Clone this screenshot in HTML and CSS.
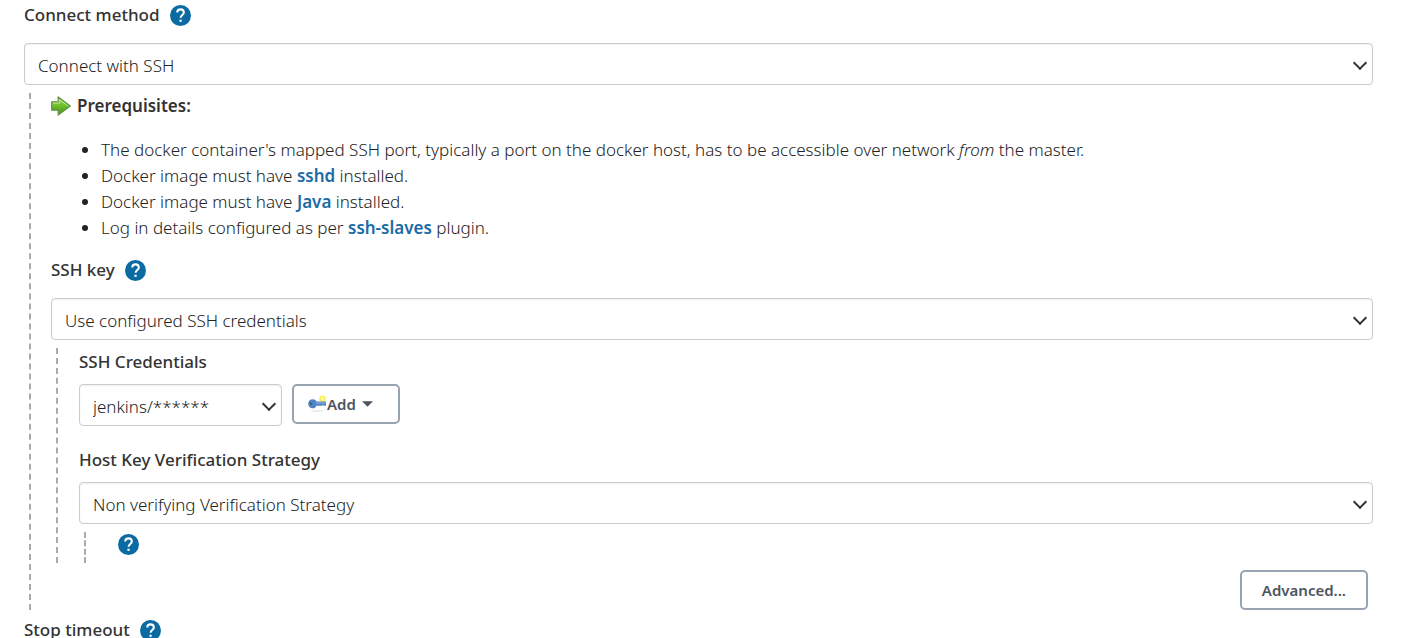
FILE: index.html
```html
<!DOCTYPE html>
<html lang="en">
<head>
<meta charset="utf-8">
<meta name="viewport" content="width=device-width, initial-scale=1">
<title>Docker agent template</title>
<link rel="stylesheet" href="styles.css">
</head>
<body>
<svg class="defs" aria-hidden="true">
  <symbol id="help" viewBox="0 0 24 24"><path d="M12 0a12 12 0 1 0 0 24 12 12 0 0 0 0-24z" fill="#0b6aa2"/><path d="M8.300 8.600C8.300 6.300 9.900 5 12 5s3.800 1.300 3.800 3.500c0 2.900-3.700 3-3.700 6.200" fill="none" stroke="#fff" stroke-width="2.300"/><path d="M10.800 16.800h2.500v2.500h-2.500z" fill="#fff"/></symbol>
</svg>
<form class="config">
  <div class="label-row">
    <label for="method">Connect method</label>
    <button type="button" class="help" aria-label="Help for Connect method"><svg><use href="#help"/></svg></button>
  </div>
  <div class="select"><select id="method"><option>Connect with SSH</option></select></div>

  <div class="nested">
    <div class="prereq">
      <svg class="arrow" viewBox="0 0 20 20" aria-hidden="true">
        <defs><linearGradient id="green" x1="0" y1="0" x2="0" y2="1"><stop offset="0" stop-color="#b3da72"/><stop offset=".5" stop-color="#6cbd28"/><stop offset="1" stop-color="#47941f"/></linearGradient></defs>
        <path d="M.7 5.800h6.500V.9L19.300 10 7.200 19.100v-4.900H.7z" fill="url(#green)" stroke="#5c9440" stroke-width="1.200" stroke-linejoin="round"/>
        <path d="M2 7.100h6.400V3.500L17.200 10" fill="none" stroke="#c9e7a4" stroke-width=".9"/>
      </svg>
      <b>Prerequisites:</b>
    </div>
    <ul class="list">
      <li>The docker container's mapped SSH port, typically a port on the docker host, has to be accessible over network <i>from</i> the master.</li>
      <li>Docker image must have <a href="#sshd">sshd</a> installed.</li>
      <li>Docker image must have <a href="#java">Java</a> installed.</li>
      <li>Log in details configured as per <a href="#ssh-slaves">ssh-slaves</a> plugin.</li>
    </ul>

    <div class="label-row">
      <label for="key">SSH key</label>
      <button type="button" class="help" aria-label="Help for SSH key"><svg><use href="#help"/></svg></button>
    </div>
    <div class="select"><select id="key"><option>Use configured SSH credentials</option></select></div>

    <div class="nested inner">
      <div class="field">
        <label for="cred">SSH Credentials</label>
        <div class="controls">
          <div class="select small"><select id="cred"><option>jenkins/******</option></select></div>
          <button type="button" class="button add">
            <svg class="key" viewBox="0 0 20 18" aria-hidden="true">
              <ellipse cx="10" cy="16" rx="7" ry="1.200" fill="#eee"/>
              <circle cx="15.500" cy="3.700" r="2.500" fill="#fff9a0" stroke="#f9ee5c" stroke-width="1.600"/>
              <path d="M6 4.200c1.500 0 2.700.9 3.400 2.300H19v4.200h-2l-1-.7-1 .7H9.400C8.700 12.300 7.500 13.300 5.800 13.300 3 13.300 1.200 11.300 1.200 8.800S3 4.200 6 4.200z" fill="#4f83c1"/>
              <path d="M8.500 8h10" stroke="#94b5dd" stroke-width="1"/><circle cx="3.800" cy="8.700" r="1.100" fill="#315d96"/>
            </svg>
            <span>Add</span>
            <svg class="caret" viewBox="0 0 12 6" aria-hidden="true"><path d="M0 0h12L6 6z" fill="#4d545d"/></svg>
          </button>
        </div>
      </div>
      <div class="field">
        <label for="strategy">Host Key Verification Strategy</label>
        <div class="select"><select id="strategy"><option>Non verifying Verification Strategy</option></select></div>
      </div>
      <div class="nested strategy">
        <button type="button" class="help" aria-label="Help for Host Key Verification Strategy"><svg><use href="#help"/></svg></button>
      </div>
    </div>
    <div class="actions"><button type="button" class="button">Advanced...</button></div>
  </div>

  <div class="label-row last">
    <span>Stop timeout</span>
    <button type="button" class="help" aria-label="Help for Stop timeout"><svg><use href="#help"/></svg></button>
  </div>
</form>
</body>
</html>
```
FILE: styles.css
```css
* { box-sizing: border-box; }
html { overflow-x: hidden; }
body {
  margin: 0;
  background: #fff;
  color: #333;
  font: 300 17px/26px "Noto Sans", "Open Sans", sans-serif;
}
.defs { position: absolute; width: 0; height: 0; }
.config { padding: 1px 32px 0 24px; }

.label-row {
  display: flex;
  align-items: center;
  gap: 10px;
  height: 28px;
  margin-bottom: 14px;
  font-weight: 500;
}
.help { width: 21px; height: 21px; padding: 0; border: 0; background: none; }
.help svg { display: block; width: 21px; height: 21px; }

.select { position: relative; }
.select::after {
  content: "";
  position: absolute;
  right: 8px;
  top: 15px;
  width: 8px;
  height: 8px;
  border: solid #333;
  border-width: 0 2px 2px 0;
  transform: rotate(45deg);
}
select {
  appearance: none;
  display: block;
  width: 100%;
  height: 42px;
  padding: 3px 13px 0;
  border: 1px solid #ccc;
  border-radius: 4px;
  background: #fff;
  box-shadow: inset 0 1px 2px #0001;
  color: #222;
  font: inherit;
}
.nested {
  margin: 8px 0 0 5px;
  padding-left: 20px;
  border-left: 2px dashed #aaa;
}
.inner { padding-left: 21px; }
.prereq { display: flex; align-items: center; gap: 6px; }
.prereq b { font-weight: 600; }
.arrow { width: 20px; height: 20px; }
.list { margin: 18px 0 15px; padding-left: 50px; color: #222; }
.list a { color: #1b6ba6; font-weight: 600; text-decoration: none; }

.field { margin-bottom: 20px; }
.field > label { display: block; margin-bottom: 8px; line-height: 28px; font-weight: 500; }
.controls { display: flex; align-items: flex-start; gap: 10px; }
.small { width: 203px; }
.button {
  height: 40px;
  padding: 0 20px;
  border: 2px solid #98a4b0;
  border-radius: 5px;
  background: #fff;
  color: #4d545d;
  font: 600 15px/20px "Noto Sans", "Open Sans", sans-serif;
}
.add { display: flex; align-items: center; padding: 0 25px 0 13px; }
.key { width: 20px; height: 18px; }
.caret { width: 11px; height: 6px; margin-left: 6px; }
.field:has(+ .strategy) { margin-bottom: 0; }
.strategy { height: 31px; padding: 2px 0 0 32px; }
.actions { display: flex; justify-content: flex-end; padding: 7px 5px 0 0; }
.last { margin: 6px 0 0; }
```
